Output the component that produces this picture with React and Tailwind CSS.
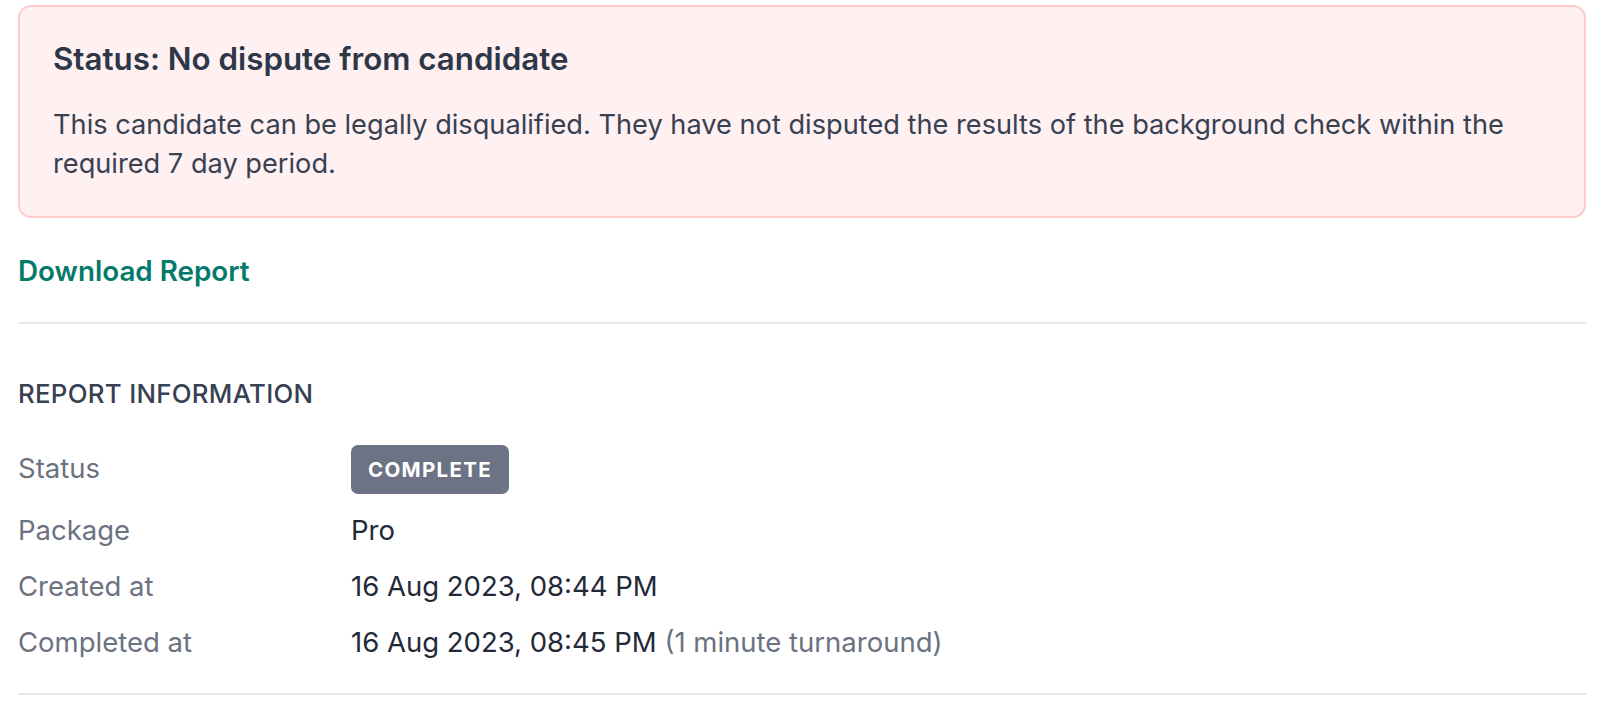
export default function App() {
  const rows = [
    { label: "Package", value: "Pro" },
    { label: "Created at", value: "16 Aug 2023, 08:44 PM" },
  ];
  return (
    <div
      className="w-[1606px] h-[706px] bg-white overflow-hidden pl-[18px] pr-[20px] pt-[5px] text-[#374151]"
      style={{ fontFamily: "Inter, 'Noto Sans', sans-serif" }}
    >
      <div className="rounded-[13px] border-2 border-[#fecaca] bg-[#fff0f1] px-[33px] pt-[32px] pb-[33px]">
        <h2 className="text-[31.3px] leading-[40px] font-semibold text-[#2d3748]">
          Status: No dispute from candidate
        </h2>
        <p className="mt-[26px] text-[27.2px] leading-[39px] text-[#374151]">
          This candidate can be legally disqualified. They have not disputed the results of the background check within the required 7 day period.
        </p>
      </div>

      <div className="mt-[33px]">
        <a className="text-[27.8px] leading-[40px] font-semibold text-[#047a6a]">Download Report</a>
      </div>

      <div className="mt-[31px] h-[2px] bg-[#e5e9f2]" />

      <div className="mt-[50px] text-[25.8px] leading-[39px] font-medium tracking-[0.3px] text-[#374151]">
        REPORT INFORMATION
      </div>

      <div className="mt-[32px] flex flex-col gap-[17px] text-[27.5px] leading-[39px]">
        <div className="flex items-start">
          <div className="w-[333px] leading-[46px] text-[#6b7280]">Status</div>
          <span className="h-[49px] px-[17px] flex items-center rounded-[7px] bg-[#6b7384] text-white text-[20.5px] font-bold tracking-[1.3px]">
            COMPLETE
          </span>
        </div>
        {rows.map((r) => (
          <div key={r.label} className="flex items-start">
            <div className="w-[333px] text-[#6b7280]">{r.label}</div>
            <div className="text-[#1f2937]">{r.value}</div>
          </div>
        ))}
        <div className="flex items-start">
          <div className="w-[333px] text-[#6b7280]">Completed at</div>
          <div className="text-[#1f2937]">
            16 Aug 2023, 08:45 PM <span className="text-[#6b7280]">(1 minute turnaround)</span>
          </div>
        </div>
      </div>

      <div className="mt-[31px] h-[2px] bg-[#e5e9f2]" />
    </div>
  );
}
